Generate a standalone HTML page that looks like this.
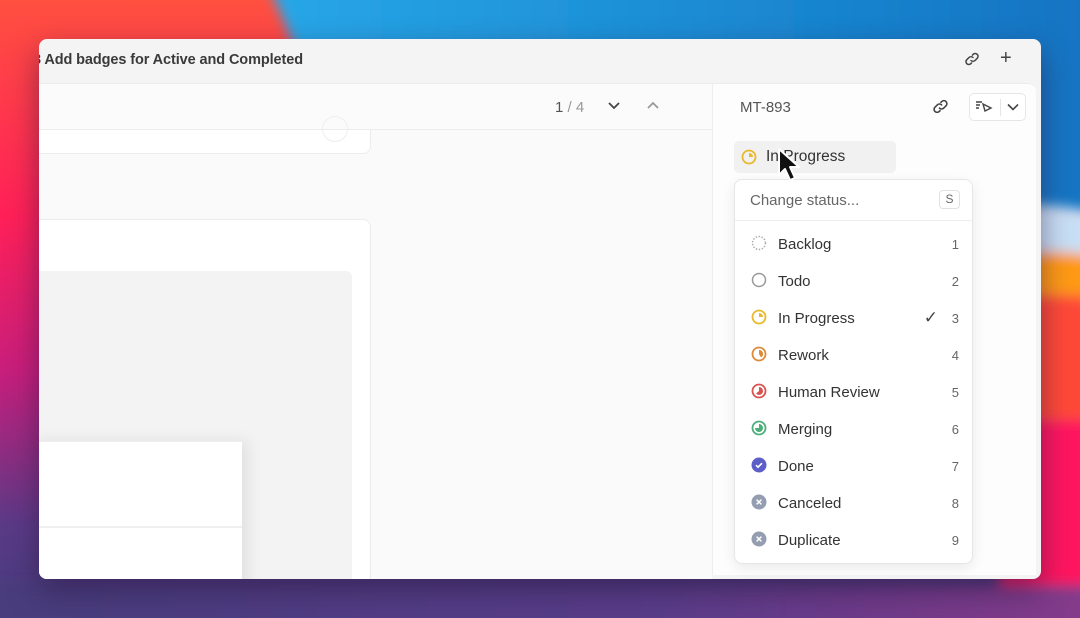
<!DOCTYPE html>
<html style="overflow:hidden;width:1080px;height:618px"><head><style>
*{margin:0;padding:0;box-sizing:border-box}
body{width:1080px;height:618px;overflow:hidden;position:relative;font-family:"Liberation Sans",sans-serif;background:#5a3a86}
.bg{position:absolute;left:0;top:0;display:block}
.win{position:absolute;left:39px;top:39px;width:1002px;height:540px;background:#f4f4f4;border-radius:8px;overflow:hidden;box-shadow:0 12px 30px rgba(40,20,60,.5)}
.title{position:absolute;left:0;top:13px;font-size:14.5px;color:#3a3a3a;font-weight:bold;letter-spacing:-.1px}
.title span{margin-left:-6px}
.left{position:absolute;left:0;top:44px;width:673px;height:496px;background:#fafafa;border-top:1px solid #ececec}
.right{position:absolute;left:673px;top:44px;width:324px;height:492px;background:#fdfdfd;border-left:1px solid #eee;border-top:1px solid #ececec;border-top-right-radius:8px}
.bar{position:absolute;left:0;top:0;width:673px;height:46px;border-bottom:1px solid #ececec;background:#fbfbfb}
.card1{position:absolute;left:-10px;top:46px;width:342px;height:24px;background:#fff;border:1px solid #ececec;border-top:none;border-radius:0 0 8px 8px}
.card2{position:absolute;left:-10px;top:135px;width:342px;height:400px;background:#fff;border:1px solid #ececec;border-radius:8px}
.grey{position:absolute;left:-10px;top:187px;width:323px;height:320px;background:#f3f3f3;border-radius:6px}
.wbox{position:absolute;left:-10px;top:357px;width:213px;height:150px;background:#fff;box-shadow:6px 0 14px rgba(0,0,0,.08);border-top:1px solid #eee}
.wline{position:absolute;left:-10px;top:442px;width:213px;height:2px;background:#efefef}
.menu{position:absolute;left:21px;top:95px;width:239px;height:385px;background:#fff;border:1px solid #e6e6e6;border-radius:8px;box-shadow:0 4px 14px rgba(0,0,0,.08)}
.row{position:absolute;left:0;width:239px;height:37px;font-size:15px;color:#333}
.row svg{position:absolute;left:16px;top:9px}
.row .t{position:absolute;left:43px;top:10px}
.row .n{position:absolute;right:15px;top:11px;font-size:13px;color:#666}
</style></head><body>
<svg class="bg" width="1080" height="618" viewBox="0 0 1080 618">
<defs>
<linearGradient id="lg" x1="0" y1="0" x2="0" y2="1"><stop offset="0" stop-color="#ff5040"/><stop offset=".35" stop-color="#ff2058"/><stop offset=".6" stop-color="#c81e7c"/><stop offset=".85" stop-color="#5a3a86"/><stop offset="1" stop-color="#463c7c"/></linearGradient>
<linearGradient id="bl" x1="0" y1="0" x2="1" y2="0"><stop offset="0" stop-color="#28a8e8"/><stop offset="1" stop-color="#1070c0"/></linearGradient>
<linearGradient id="bt" x1="0" y1="0" x2="1" y2="0"><stop offset="0" stop-color="#463c7c"/><stop offset=".6" stop-color="#5a3c8a"/><stop offset="1" stop-color="#8a3a8a"/></linearGradient>
<filter id="bb" x="-50%" y="-50%" width="200%" height="200%"><feGaussianBlur stdDeviation="6"/></filter>
</defs>
<rect width="1080" height="618" fill="url(#lg)"/>
<path d="M250 -60 L1150 -60 L1150 220 L1000 220 L300 60 Z" fill="url(#bl)" filter="url(#bb)"/>
<g filter="url(#bb)">
<path d="M1000 205 Q1060 200 1150 225 L1150 265 Q1050 245 1000 260 Z" fill="#c8dff5"/>
<path d="M1000 255 Q1050 245 1150 265 L1150 305 Q1050 290 1000 300 Z" fill="#ff9a18"/>
<path d="M1000 300 Q1050 288 1150 305 L1150 430 L1000 430 Z" fill="#ff4a38"/>
<path d="M1000 420 L1150 420 L1150 600 L1000 600 Z" fill="#ff1860"/>
<rect x="-60" y="585" width="1200" height="100" fill="url(#bt)"/>
</g>
</svg>
<div class="win">
 <div class="title"><span>3 Add badges for Active and Completed</span></div>
 <svg style="position:absolute;left:925px;top:12px" width="16" height="16" viewBox="0 0 16 16" fill="none" stroke="#444" stroke-width="1.5" stroke-linecap="round"><path d="M7 9.5a3 3 0 0 0 4 0l2.2-2.2a2.8 2.8 0 0 0-4-4L8.4 4.1"/><path d="M9 6.5a3 3 0 0 0-4 0L2.8 8.7a2.8 2.8 0 0 0 4 4l.8-.8"/></svg>
 <div style="position:absolute;left:961px;top:8px;font-size:20px;color:#444">+</div>
 <div class="left">
  <div class="bar">
   <div style="position:absolute;left:516px;top:15px;font-size:15px;color:#555">1 <span style="color:#999">/ 4</span></div>
   <svg style="position:absolute;left:568px;top:17px" width="14" height="10" viewBox="0 0 14 10" fill="none" stroke="#444" stroke-width="1.8"><path d="M2 2l5 5 5-5"/></svg>
   <svg style="position:absolute;left:607px;top:16px" width="14" height="10" viewBox="0 0 14 10" fill="none" stroke="#999" stroke-width="1.8"><path d="M2 8l5-5 5 5"/></svg>
  </div>
  <div class="card1"><div style="position:absolute;left:292px;top:-14px;width:26px;height:26px;border:1px solid #eee;border-radius:50%"></div></div>
  <div class="card2"></div>
  <div class="grey"></div>
  <div class="wbox"></div>
  <div class="wline"></div>
 </div>
 <div class="right">
  <div style="position:absolute;left:27px;top:15px;font-size:15px;color:#555">MT-893</div>
  <svg style="position:absolute;left:219px;top:14px" width="17" height="17" viewBox="0 0 16 16" fill="none" stroke="#444" stroke-width="1.5" stroke-linecap="round"><path d="M7 9.5a3 3 0 0 0 4 0l2.2-2.2a2.8 2.8 0 0 0-4-4L8.4 4.1"/><path d="M9 6.5a3 3 0 0 0-4 0L2.8 8.7a2.8 2.8 0 0 0 4 4l.8-.8"/></svg>
  <div style="position:absolute;left:256px;top:9px;width:57px;height:28px;border:1px solid #e6e6e6;border-radius:5px;background:#fff">
   <svg style="position:absolute;left:5px;top:6px" width="18" height="14" viewBox="0 0 18 14" fill="none" stroke="#444" stroke-width="1.4"><path d="M1 2h6M1 5h4M1 8h3M8 4l8 4-6 3z"/></svg>
   <div style="position:absolute;left:30px;top:5px;width:1px;height:17px;background:#e5e5e5"></div>
   <svg style="position:absolute;left:37px;top:9px" width="12" height="8" viewBox="0 0 12 8" fill="none" stroke="#444" stroke-width="1.6"><path d="M1 1.5l5 5 5-5"/></svg>
  </div>
  <div style="position:absolute;left:21px;top:57px;width:162px;height:32px;background:#f1f1f1;border-radius:5px">
   <svg style="position:absolute;left:7px;top:8px" width="16" height="16" viewBox="0 0 16 16"><circle cx="8" cy="8" r="6.5" fill="none" stroke="#e8b92a" stroke-width="1.8"/><path d="M8 8V4a4 4 0 0 1 4 4z" fill="#e8b92a"/></svg>
   <div style="position:absolute;left:32px;top:7px;font-size:15.5px;color:#333">In Progress</div>
  </div>
  <div class="menu">
   <div style="position:absolute;left:15px;top:12px;font-size:15px;color:#666">Change status...</div>
   <div style="position:absolute;right:12px;top:10px;width:21px;height:19px;border:1px solid #e2e2e2;border-radius:4px;font-size:12px;color:#666;text-align:center;line-height:17px">S</div>
   <div style="position:absolute;left:0;top:40px;width:100%;height:1px;background:#eee"></div>
   <div class="row" style="top:46px"><svg width="16" height="16" viewBox="0 0 16 16"><circle cx="8" cy="8" r="6.5" fill="none" stroke="#aaa" stroke-width="1.5" stroke-dasharray="1.4 1.6"/></svg><span class="t">Backlog</span><span class="n">1</span></div>
   <div class="row" style="top:83px"><svg width="16" height="16" viewBox="0 0 16 16"><circle cx="8" cy="8" r="6.5" fill="none" stroke="#999" stroke-width="1.5"/></svg><span class="t">Todo</span><span class="n">2</span></div>
   <div class="row" style="top:120px"><svg width="16" height="16" viewBox="0 0 16 16"><circle cx="8" cy="8" r="6.5" fill="none" stroke="#e8b92a" stroke-width="1.8"/><path d="M8 8V4a4 4 0 0 1 4 4z" fill="#e8b92a"/></svg><span class="t">In Progress</span><span style="position:absolute;right:36px;top:8px;font-size:17px;color:#444">✓</span><span class="n">3</span></div>
   <div class="row" style="top:157px"><svg width="16" height="16" viewBox="0 0 16 16"><circle cx="8" cy="8" r="6.5" fill="none" stroke="#dc8a3c" stroke-width="1.8"/><path d="M8 8V4a4 4 0 0 1 2 7.5z" fill="#dc8a3c"/></svg><span class="t">Rework</span><span class="n">4</span></div>
   <div class="row" style="top:194px"><svg width="16" height="16" viewBox="0 0 16 16"><circle cx="8" cy="8" r="6.5" fill="none" stroke="#d9534f" stroke-width="1.8"/><path d="M8 8V4a4 4 0 0 1 0 8a4 4 0 0 1-3-1.5z" fill="#d9534f"/></svg><span class="t">Human Review</span><span class="n">5</span></div>
   <div class="row" style="top:231px"><svg width="16" height="16" viewBox="0 0 16 16"><circle cx="8" cy="8" r="6.5" fill="none" stroke="#4caf7a" stroke-width="1.8"/><path d="M8 8V4a4 4 0 1 1-4 4z" fill="#4caf7a"/></svg><span class="t">Merging</span><span class="n">6</span></div>
   <div class="row" style="top:268px"><svg width="16" height="16" viewBox="0 0 16 16"><circle cx="8" cy="8" r="7.5" fill="#5b5fc7"/><path d="M5 8.2l2 2 4-4" fill="none" stroke="#fff" stroke-width="1.6"/></svg><span class="t">Done</span><span class="n">7</span></div>
   <div class="row" style="top:305px"><svg width="16" height="16" viewBox="0 0 16 16"><circle cx="8" cy="8" r="7.5" fill="#959db0"/><path d="M5.6 5.6l4.8 4.8M10.4 5.6l-4.8 4.8" stroke="#fff" stroke-width="1.5"/></svg><span class="t">Canceled</span><span class="n">8</span></div>
   <div class="row" style="top:342px"><svg width="16" height="16" viewBox="0 0 16 16"><circle cx="8" cy="8" r="7.5" fill="#959db0"/><path d="M5.6 5.6l4.8 4.8M10.4 5.6l-4.8 4.8" stroke="#fff" stroke-width="1.5"/></svg><span class="t">Duplicate</span><span class="n">9</span></div>
  </div>
  <svg style="position:absolute;left:64px;top:63px" width="26" height="36" viewBox="0 0 26 36"><path d="M2 2v26l6-6 5 11 5-2-5-11h9z" fill="#111" stroke="#fff" stroke-width="2" stroke-linejoin="round"/></svg>
 </div>
</div>
</body></html>
